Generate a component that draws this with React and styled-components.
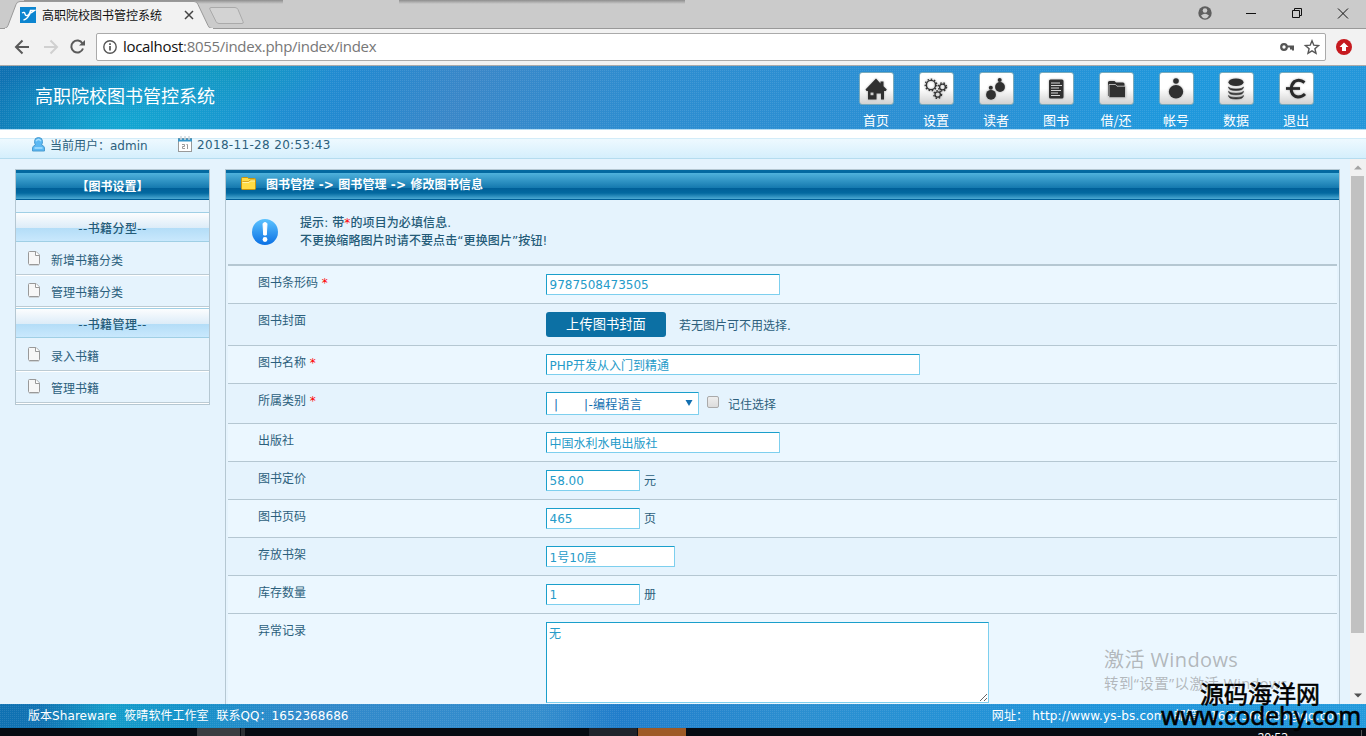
import React from 'react';
import styled, { createGlobalStyle } from 'styled-components';

const navItems = [
  { label: '首页', icon: 'home' },
  { label: '设置', icon: 'gears' },
  { label: '读者', icon: 'readers' },
  { label: '图书', icon: 'book' },
  { label: '借/还', icon: 'folder' },
  { label: '帐号', icon: 'account' },
  { label: '数据', icon: 'data' },
  { label: '退出', icon: 'exit' },
];

const menu = [
  { title: '--书籍分型--', items: ['新增书籍分类', '管理书籍分类'] },
  { title: '--书籍管理--', items: ['录入书籍', '管理书籍'] },
];

const Gear = ({ cx, cy, r, w }) => (
  <>
    <circle cx={cx} cy={cy} r={r} fill="none" stroke="#333" strokeWidth={w} />
    <circle cx={cx} cy={cy} r={r + 1.2} fill="none" stroke="#333" strokeWidth="1.3" strokeDasharray="1.5 1.8" />
  </>
);

const glyphs = {
  home: (
    <path d="M12 1.5 1.5 12.5 2.6 14H4v8.5h8.5v-6h4.5v6h3V14h1.8l1-1.4-3.3-3.3V4.5h-3v2zM6.5 15.5h3v2.8h-3z" fillRule="evenodd" />
  ),
  gears: (
    <>
      <Gear cx={7} cy={8} r={4.6} w={1.4} />
      <Gear cx={18.5} cy={10} r={2.9} w={1.3} />
      <Gear cx={13.700} cy={17.500} r={2.7} w={1.3} />
    </>
  ),
  readers: (
    <>
      <circle cx="15.7" cy="3" r="2" />
      <circle cx="16" cy="10" r="4.9" />
      <circle cx="6.8" cy="10.800" r="2" />
      <circle cx="7" cy="17.800" r="4.9" />
    </>
  ),
  book: (
    <>
      <rect x="5" y="2.5" width="14.5" height="19" rx="1.5" />
      <path d="M7 6h9M7 8.5h11M7 11h8M7 13.500h10M7 16h7M7 18.500h9" stroke="#d5d5d5" strokeWidth="1" />
    </>
  ),
  folder: (
    <>
      <path d="M4 5.500q0-1.500 1.500-1.500h5l1.500 1.500h7q1.500 0 1.500 1.500v3H5v9H4z" />
      <path d="M5 7.500h6.500l1.500 1.700h8.500v11.500H5z" stroke="#eee" strokeWidth=".7" />
    </>
  ),
  account: (
    <>
      <circle cx="12" cy="4" r="2.800" />
      <ellipse cx="12" cy="14.700" rx="7.200" ry="6.700" />
    </>
  ),
  data: (
    <>
      <ellipse cx="12" cy="5.300" rx="7.500" ry="3.800" />
      <path d="M4.500 10q0 3.500 7.500 3.500t7.500-3.500q-1 2-7.500 2t-7.500-2zM4.500 14.300q0 3.500 7.500 3.500t7.500-3.500q-1 2-7.500 2t-7.500-2zM4.500 18.500q0 3.500 7.500 3.500t7.500-3.500q-1 2-7.500 2t-7.500-2z" stroke="#333" strokeWidth=".6" />
    </>
  ),
  exit: (
    <>
      <path d="M20.500 5.500Q15.500 1.500 10.500 4.500 6.500 8 7.500 14.500 9 19.500 14 20q4 0 7-3" fill="none" stroke="#292929" strokeWidth="3" />
      <path d="M2 11.500h14" stroke="#292929" strokeWidth="2.700" />
    </>
  ),
};

const NavIcon = ({ name }) => (
  <IconBox>
    <svg width="24" height="24" viewBox="0 0 24 24" fill="#303030">{glyphs[name]}</svg>
  </IconBox>
);

const PageIcon = () => (
  <svg width="12" height="15" viewBox="0 0 12 15">
    <path d="M.5 1.500q0-1 1-1h6.500l3.500 3.500v8.500q0 1-1 1h-9q-1 0-1-1z" fill="#f7f7f7" stroke="#999" />
    <path d="M7.500.500V4.500h4" fill="#fff" stroke="#999" />
    <path d="M1 14.500h10" stroke="#cdd4d8" />
  </svg>
);

const FormRow = ({ label, required, children }) => (
  <Row>
    <Label>{label}{required ? <Star> *</Star> : null}</Label>
    <Field>{children}</Field>
  </Row>
);

const Browser = () => (
  <>
    <TabStrip>
      <svg width="250" height="29" viewBox="0 0 250 29">
        <path d="M0 28.500h4q3 0 4-3l8-21q1-3 4-3h174q3 0 4 3l10 21q1 3 4 3h38" fill="#f2f2f2" stroke="#999" />
        <path d="M5 29h208" stroke="#f2f2f2" strokeWidth="2" />
        <path d="M211 7.500h24q2 0 3 2l5 12q1 2-1 2h-23q-2 0-3-2l-6-12q-1-2 1-2z" fill="#d3d3d3" stroke="#aaa" />
        <rect x="20" y="7" width="16" height="16" fill="#0c85d0" />
        <path d="M22 13q2.500-1.500 3 .8t2.500 1.700 3-5M31 11.500q-3 7.500-7.500 8.500M30 10.500h4.500l-3.500 2.500" fill="none" stroke="#fff" strokeWidth="1.400" />
        <path d="m185 11 8 8m0-8-8 8" stroke="#444" strokeWidth="1.500" />
      </svg>
      <TabTitle>高职院校图书管控系统</TabTitle>
      <WindowButtons>
        <svg width="168" height="28" viewBox="0 0 168 28" fill="none" stroke="#111">
          <circle cx="7" cy="13" r="6.700" fill="#5f5f5f" stroke="none" />
          <circle cx="7" cy="10.500" r="2.300" fill="#ccc" stroke="none" />
          <path d="M3 15.500q4-3.500 8 0-1.500 3-4 3t-4-3z" fill="#ccc" stroke="none" />
          <path d="M48 13.500h10M94.500 10.500h7v7h-7zM96.500 10.500v-2h7v7h-2M140 8.500l10 10m0-10-10 10" />
        </svg>
      </WindowButtons>
    </TabStrip>
    <Toolbar>
      <svg width="76" height="36" viewBox="0 0 76 36" fill="none" strokeWidth="2">
        <path d="M22 18H9m6.500-6.500L9 18l6.500 6.500" transform="translate(-2)" stroke="#5a5a5a" />
        <path d="M36 18h13m-6.500-6.500L49 18l-6.500 6.500" transform="translate(-1)" stroke="#d0d0d0" />
        <path d="M75 14.500a6 6 0 1 0 .5 5" transform="translate(-1.500)" stroke="#5a5a5a" />
        <path d="M76 11v5.500h-6z" fill="#5a5a5a" />
      </svg>
      <AddressBar>
        <svg width="14" height="14" viewBox="0 0 14 14">
          <circle cx="7" cy="7" r="6.200" fill="none" stroke="#555" strokeWidth="1.400" />
          <path d="M7 6v4.500M7 3.200v1.700" stroke="#555" strokeWidth="1.700" />
        </svg>
        <Url><b>localhost</b>:8055/index.php/index/index</Url>
        <svg width="42" height="16" viewBox="0 0 42 16" fill="none" stroke="#555">
          <circle cx="6" cy="8" r="2.800" strokeWidth="2.200" />
          <path d="M9 7.500h6v4m-2-4v3" strokeWidth="2" />
          <path d="m34 1.800 1.800 4.400 4.800.4-3.700 3.100 1.100 4.600-4-2.500-4 2.500 1.100-4.600-3.700-3.100 4.800-.4z" strokeWidth="1.400" />
        </svg>
      </AddressBar>
      <svg width="16" height="16" viewBox="0 0 16 16">
        <circle cx="8" cy="8" r="8" fill="#c61a1f" />
        <path d="M8 3.500 12.500 8H10v4H6V8H3.500z" fill="#fff" />
      </svg>
    </Toolbar>
  </>
);

const Sidebar = () => (
  <Side>
    <SideTitle>【图书设置】</SideTitle>
    {
      menu.map(group => (
        <div key={group.title}>
          <GroupTitle>{group.title}</GroupTitle>
          {
            group.items.map(item => (
              <MenuItem key={item}><PageIcon />{item}</MenuItem>
            ))
          }
        </div>
      ))
    }
  </Side>
);

const BookForm = () => (
  <Panel>
    <PanelTitle>
      <svg width="15" height="13" viewBox="0 0 15 13">
        <path d="M.5 1.500q0-1 1-1h5l1 1h6q1 0 1 1v9q0 1-1 1h-12q-1 0-1-1z" fill="#ffdc45" stroke="#c9940c" />
        <path d="M1.500 4.500h6l1.500-1.500h5" fill="none" stroke="#d9a520" />
        <path d="M1.500 5.500h6.500l1.500-1.500h4.500" fill="none" stroke="#fff4a8" />
      </svg>
      图书管控 -&gt; 图书管理 -&gt; 修改图书信息
    </PanelTitle>
    <Notice>
      <svg width="26" height="26" viewBox="0 0 26 26">
        <defs>
          <linearGradient id="tip" x2="0" y2="1">
            <stop stopColor="#5cc3ff" />
            <stop offset="1" stopColor="#0b70e4" />
          </linearGradient>
        </defs>
        <circle cx="13" cy="13" r="13" fill="url(#tip)" />
        <path d="M11 4.500q2-2 4 0L14.300 16h-2.600z" fill="#fff" stroke="#fff" />
        <circle cx="13" cy="20.500" r="2.400" fill="#fff" />
      </svg>
      <NoticeText>
        提示: 带<Star>*</Star>的项目为必填信息.<br />
        不更换缩略图片时请不要点击“更换图片”按钮!
      </NoticeText>
    </Notice>
    <FormRow label="图书条形码" required>
      <Input $width={234} defaultValue="9787508473505" />
    </FormRow>
    <FormRow label="图书封面">
      <Upload>上传图书封面</Upload>
      <Hint $gap={13} $top={5}>若无图片可不用选择.</Hint>
    </FormRow>
    <FormRow label="图书名称" required>
      <Input $width={374} defaultValue="PHP开发从入门到精通" />
    </FormRow>
    <FormRow label="所属类别" required>
      <Select>
        <span>|</span>
        <span>|-编程语言</span>
        <svg width="8" height="6" viewBox="0 0 8 6"><path d="M.5 0h7L4 6z" fill="#126fb0" /></svg>
      </Select>
      <Check />
      <Hint $gap={9} $top={4}>记住选择</Hint>
    </FormRow>
    <FormRow label="出版社">
      <Input $width={234} defaultValue="中国水利水电出版社" />
    </FormRow>
    <FormRow label="图书定价">
      <Input $width={94} defaultValue="58.00" />
      <Hint $gap={4} $top={2}>元</Hint>
    </FormRow>
    <FormRow label="图书页码">
      <Input $width={94} defaultValue="465" />
      <Hint $gap={4} $top={2}>页</Hint>
    </FormRow>
    <FormRow label="存放书架">
      <Input $width={129} defaultValue="1号10层" />
    </FormRow>
    <FormRow label="库存数量">
      <Input $width={94} defaultValue="1" />
      <Hint $gap={4} $top={2}>册</Hint>
    </FormRow>
    <FormRow label="异常记录">
      <TextArea defaultValue="无" />
    </FormRow>
  </Panel>
);

const App = () => (
  <Screen>
    <GlobalStyle />
    <Browser />
    <Header>
      <Brand>高职院校图书管控系统</Brand>
      <Nav>
        {
          navItems.map(item => (
            <NavLink key={item.label}>
              <NavIcon name={item.icon} />
              {item.label}
            </NavLink>
          ))
        }
      </Nav>
    </Header>
    <StatusBar>
      <svg width="13" height="15" viewBox="0 0 13 15">
        <path d="M.5 14V11q0-2 3-3-1-1.500-1-3.500 0-4 4-4t4 4q0 2-1 3.500 3 1 3 3v3z" fill="#5bb8f3" stroke="#4a9bd0" />
        <path d="M4 4q2.500-3 5 0M2.500 11h8" fill="none" stroke="#a8e0ff" strokeWidth="1.500" />
      </svg>
      <UserName>当前用户：admin</UserName>
      <svg width="14" height="16" viewBox="0 0 14 16">
        <rect x=".5" y="2.500" width="13" height="13" fill="#fff" stroke="#999" />
        <path d="M0 4h14" stroke="#3796c8" strokeWidth="3" />
        <path d="M3 0v4m4-4v4m4-4v4" stroke="#cfd8dd" strokeWidth="1.500" />
        <path d="M4 8.500h2.500v2H4.500v2H7M8.500 8.500h1v4.500" fill="none" stroke="#999" />
      </svg>
      <LoginTime>2018-11-28 20:53:43</LoginTime>
    </StatusBar>
    <Main>
      <Sidebar />
      <BookForm />
      <ScrollTrack>
        <svg width="8" height="5" viewBox="0 0 8 5"><path d="M4 .5 8 4.500H0z" fill="#a3a3a3" /></svg>
        <ScrollThumb />
        <svg width="8" height="5" viewBox="0 0 8 5"><path d="M0 .5h8L4 4.500z" fill="#505050" /></svg>
      </ScrollTrack>
    </Main>
    <Footer>
      <Copyright>版本Shareware&nbsp; 筱晴软件工作室&nbsp; 联系QQ：1652368686</Copyright>
      <Contact>网址： http://www.ys-bs.com&nbsp; 邮箱：1652368686@qq.com</Contact>
    </Footer>
    <Taskbar>
      <Task $left={197} $width={43} $color="#3a3d41" />
      <Task $left={1} $width={4} $color="#2c3034" />
      <Task $left={344} $width={48} $color="#20242c" />
      <Task $left={1} $width={48} $color="#9e5a26" />
      <Clock>20:53</Clock>
    </Taskbar>
    <Activate>
      <h2>激活 Windows</h2>
      <p>转到“设置”以激活 Windows。</p>
    </Activate>
    <SiteMark>
      <h3>源码海洋网</h3>
      <p>www.codehy.com</p>
    </SiteMark>
  </Screen>
);

export default App;

const GlobalStyle = createGlobalStyle`
  * {
    box-sizing: border-box;
  }
  body {
    margin: 0;
    overflow: hidden;
    font: 12px/18px 'DejaVu Sans', 'Noto Sans CJK SC', sans-serif;
    color: #2c5f7c;
  }
  svg {
    display: block;
    flex: none;
  }
  input, textarea, button {
    font: inherit;
  }
`
const Screen = styled.div`
  position: relative;
  display: flex;
  flex-direction: column;
  width: 1366px;
  height: 736px;
  overflow: hidden;
`
const TabStrip = styled.div`
  display: flex;
  height: 29px;
  flex: none;
  background:
    linear-gradient(#8e8e8e, #cbcbcb) 24px 0 / 259px 4px no-repeat,
    linear-gradient(#8e8e8e, #cbcbcb) 399px 0 / 286px 4px no-repeat,
    #cbcbcb;
  box-shadow: inset 0 -1px #999;
`
const TabTitle = styled.div`
  margin-left: -208px;
  padding-top: 6px;
  color: #111;
  white-space: nowrap;
  font-family: 'Noto Sans CJK SC', sans-serif;
`
const WindowButtons = styled.div`
  margin-left: auto;
`
const Toolbar = styled.div`
  display: flex;
  align-items: center;
  flex: none;
  height: 37px;
  padding: 0 14px 1px 8px;
  background: #f2f2f2;
  border-bottom: 1px solid #aaa;
  > svg:first-child {
    width: 78px;
    margin-right: 10px;
    overflow: visible;
  }
`
const AddressBar = styled.div`
  display: flex;
  align-items: center;
  flex: 1;
  height: 28px;
  padding: 0 5px 0 6px;
  margin-right: 10px;
  background: #fff;
  border: 1px solid #aaa;
  border-radius: 2px;
`
const Url = styled.div`
  flex: 1;
  margin: -2px 0 0 6px;
  font: 15px/20px 'Open Sans', sans-serif;
  letter-spacing: -.31px;
  color: #777;
  b {
    font-weight: 400;
    color: #111;
  }
`
const dots = 'conic-gradient(at 1px 1px, transparent 75%, rgba(255, 255, 255, .1) 0) 0 0 / 2px 2px'
const Header = styled.header`
  display: flex;
  justify-content: space-between;
  flex: none;
  height: 64px;
  padding: 0 40px 0 35px;
  color: #fff;
  border-bottom: 1px solid #b3dcf3;
  background:
    ${dots},
    radial-gradient(ellipse 160px 70px at 125px 58px, #13a6d2, rgba(19, 166, 210, 0)),
    radial-gradient(ellipse 110px 50px at 225px 0, #1299c0, rgba(18, 153, 192, 0)),
    linear-gradient(115deg, #0f71b2 0, #1077b4 80px, #1890c6 150px, #1c90d2 250px, #2389d0 330px, #3a87c8 430px, #2d8dd0 600px, #2a90d4 900px, #1e98dc 1080px, #2895d8 1366px);
`
const Brand = styled.h1`
  margin: 0;
  padding-top: 17px;
  font: 18px/24px 'Noto Sans CJK SC', sans-serif;
`
const Nav = styled.nav`
  display: flex;
`
const NavLink = styled.div`
  display: flex;
  flex-direction: column;
  align-items: center;
  width: 60px;
  padding-top: 6px;
  font: 13px/20px 'Noto Sans CJK SC', sans-serif;
`
const IconBox = styled.div`
  display: flex;
  align-items: center;
  justify-content: center;
  flex: none;
  width: 35px;
  height: 33px;
  margin-bottom: 5px;
  background: linear-gradient(#fff 50%, #d2d2d2);
  border: 1px solid #7aaabb;
  border-radius: 3px;
  svg {
    filter: drop-shadow(0 0 1px #aaa);
  }
`
const StatusBar = styled.div`
  display: flex;
  align-items: center;
  flex: none;
  height: 29px;
  padding: 0 0 0 32px;
  background: linear-gradient(#fff 8px, #d2ecf9 8px, #d2ecf9 9px, #eef9ff 9px, #d5effc);
  border-bottom: 1px solid #b5dcef;
`
const UserName = styled.div`
  width: 128px;
  margin: 3px 0 0 5px;
  height: 18px;
  white-space: nowrap;
  + svg {
    margin-right: 5px;
  }
`
const LoginTime = styled.div`
  margin-top: 2px;
  letter-spacing: .33px;
`
const Main = styled.main`
  display: flex;
  flex: 1;
  min-height: 0;
  align-items: flex-start;
  overflow: hidden;
  background: #e5f3fd;
`
const Side = styled.aside`
  flex: none;
  width: 195px;
  height: 236px;
  margin: 10px 15px 0;
  border: 1px solid #b5c7d2;
`
const bar = 'linear-gradient(#0369a0 3px, #4fb2dc 3px, #1478ae 18px, #005f98 18px, #0369a0 23px, #4ba9d3 29px, #005f98 29px)'
const SideTitle = styled.div`
  height: 30px;
  margin-bottom: 12px;
  padding-top: 8px;
  text-align: center;
  font-weight: bold;
  color: #fff;
  background: ${bar};
`
const GroupTitle = styled.div`
  height: 30px;
  margin-bottom: 1px;
  padding-top: 7px;
  text-align: center;
  font-weight: 500;
  letter-spacing: .4px;
  color: #245b78;
  border-top: 1px solid #9fcfe5;
  border-bottom: 1px solid #9fcfe5;
  background: linear-gradient(#fcfdfe, #dcecf8 15px, #b3ddf7 15px, #c9e8fd);
  div + div > & {
    margin-top: 1px;
  }
`
const MenuItem = styled.div`
  display: flex;
  align-items: center;
  gap: 11px;
  height: 32px;
  padding: 4px 0 0 12px;
  border-bottom: 1px solid #bccbd4;
  box-shadow: 0 1px #fff;
  svg {
    margin-top: -4px;
  }
`
const Panel = styled.section`
  flex: none;
  width: 1115px;
  height: 600px;
  margin: 10px 10px 0 0;
  border: 1px solid #b5c7d2;
`
const PanelTitle = styled.div`
  display: flex;
  align-items: center;
  gap: 10px;
  height: 30px;
  padding: 0 15px;
  font-weight: bold;
  letter-spacing: .1px;
  color: #fff;
  background: ${bar};
  svg {
    margin-top: -3px;
  }
`
const Notice = styled.div`
  display: flex;
  align-items: center;
  gap: 22px;
  height: 66px;
  margin: 0 2px;
  padding: 0 0 1px 24px;
  font-weight: 500;
  color: #245b78;
  border-bottom: 2px solid #b5c7d2;
`
const NoticeText = styled.div`
  letter-spacing: .1px;
`
const Row = styled.div`
  display: flex;
  margin: 0 2px;
  padding: 8px 0 8px 30px;
  border-bottom: 1px solid #b5c7d2;
  &:nth-child(odd), &:last-child {
    background: #ebf7ff;
  }
`
const Label = styled.label`
  width: 288px;
  height: 17px;
  line-height: 19px;
`
const Star = styled.span`
  color: #f00;
`
const Field = styled.div`
  display: flex;
`
const Input = styled.input`
  width: ${props => props.$width}px;
  height: 21px;
  padding: 0 2px 0 2.500px;
  outline: 0;
  border: 1px solid #7dcfee;
  border-top-color: #1a9fcb;
  border-left-color: #1a9fcb;
  border-radius: 1px;
  color: #259bc9;
  background: #fff;
`
const Upload = styled.button`
  width: 120px;
  height: 25px;
  padding: 0;
  border: 0;
  border-radius: 3px;
  font-size: 13.3px;
  color: #fff;
  background: #0c70a4;
`
const Hint = styled.span`
  margin: ${props => props.$top}px 0 0 ${props => props.$gap}px;
  height: 18px;
`
const Select = styled.div`
  display: flex;
  width: 153px;
  height: 23px;
  padding: 3px 5px 0 7px;
  border: 1px solid #7dcfee;
  border-top-color: #1a9fcb;
  border-left-color: #1a9fcb;
  border-radius: 1px;
  color: #126fb0;
  background: #fff;
  span + span {
    margin-left: 26px;
    letter-spacing: .3px;
  }
  svg {
    margin: 4px 0 0 auto;
  }
`
const Check = styled.div`
  width: 12px;
  height: 12px;
  margin: 4px 0 0 8px;
  border: 1px solid #aaa;
  border-radius: 2px;
  background: linear-gradient(#eee, #dcdcdc);
`
const TextArea = styled.textarea`
  width: 443px;
  height: 81px;
  padding: 2px;
  outline: 0;
  border: 1px solid #7dcfee;
  border-top-color: #1a9fcb;
  border-left-color: #1a9fcb;
  color: #259bc9;
`
const ScrollTrack = styled.div`
  display: flex;
  flex-direction: column;
  align-items: center;
  width: 16px;
  height: 100%;
  padding: 6px 1px 6px 0;
  background: #f1f1f1;
  svg:last-child {
    margin-top: auto;
  }
`
const ScrollThumb = styled.div`
  width: 13px;
  height: 457px;
  margin-top: 6px;
  background: #c1c1c1;
`
const Footer = styled.footer`
  display: flex;
  justify-content: space-between;
  flex: none;
  height: 24px;
  padding: 3px 20px 0 28px;
  color: #fff;
  background:
    ${dots},
    linear-gradient(90deg, #0f71b2 0, #1072b2 40px, #149dca 110px, #1591c9 190px, #3088ca 300px, #338dcd 540px, #207dcb 620px, #2b8fd0 800px, #1e94da 1100px, #239adc 1366px);
`
const Copyright = styled.div`
  letter-spacing: .06px;
`
const Contact = styled.div`
  letter-spacing: .17px;
`
const Taskbar = styled.div`
  display: flex;
  flex: none;
  height: 8px;
  overflow: hidden;
  background: #060b12;
`
const Task = styled.div`
  width: ${props => props.$width}px;
  margin-left: ${props => props.$left}px;
  background: ${props => props.$color};
`
const Clock = styled.div`
  margin: 2px 4px 0 auto;
  padding-right: 73px;
  border-right: 1px solid #555;
  font: 12px/16px 'Open Sans', sans-serif;
  color: #fff;
`
const Activate = styled.div`
  position: absolute;
  left: 1104px;
  top: 646px;
  white-space: nowrap;
  color: rgba(130, 130, 130, .55);
  font-family: 'Open Sans', 'Noto Sans CJK SC', sans-serif;
  h2 {
    margin: 0;
    font-size: 20px;
    line-height: 28px;
    font-weight: 400;
    letter-spacing: .4px;
  }
  p {
    margin: 0;
    font-size: 14.5px;
    line-height: 20px;
    letter-spacing: .4px;
  }
`
const SiteMark = styled.div`
  position: absolute;
  left: 1161px;
  top: 680px;
  width: 204px;
  white-space: nowrap;
  color: #000;
  font-family: 'Noto Sans', 'Noto Sans CJK SC', sans-serif;
  h3, p {
    margin: 0;
    font-weight: 400;
    -webkit-text-stroke: .6px #000;
  }
  h3 {
    padding-left: 39px;
    font-size: 24px;
    line-height: 28px;
  }
  p {
    font-size: 24.500px;
    line-height: 16px;
    letter-spacing: -.1px;
  }
`
